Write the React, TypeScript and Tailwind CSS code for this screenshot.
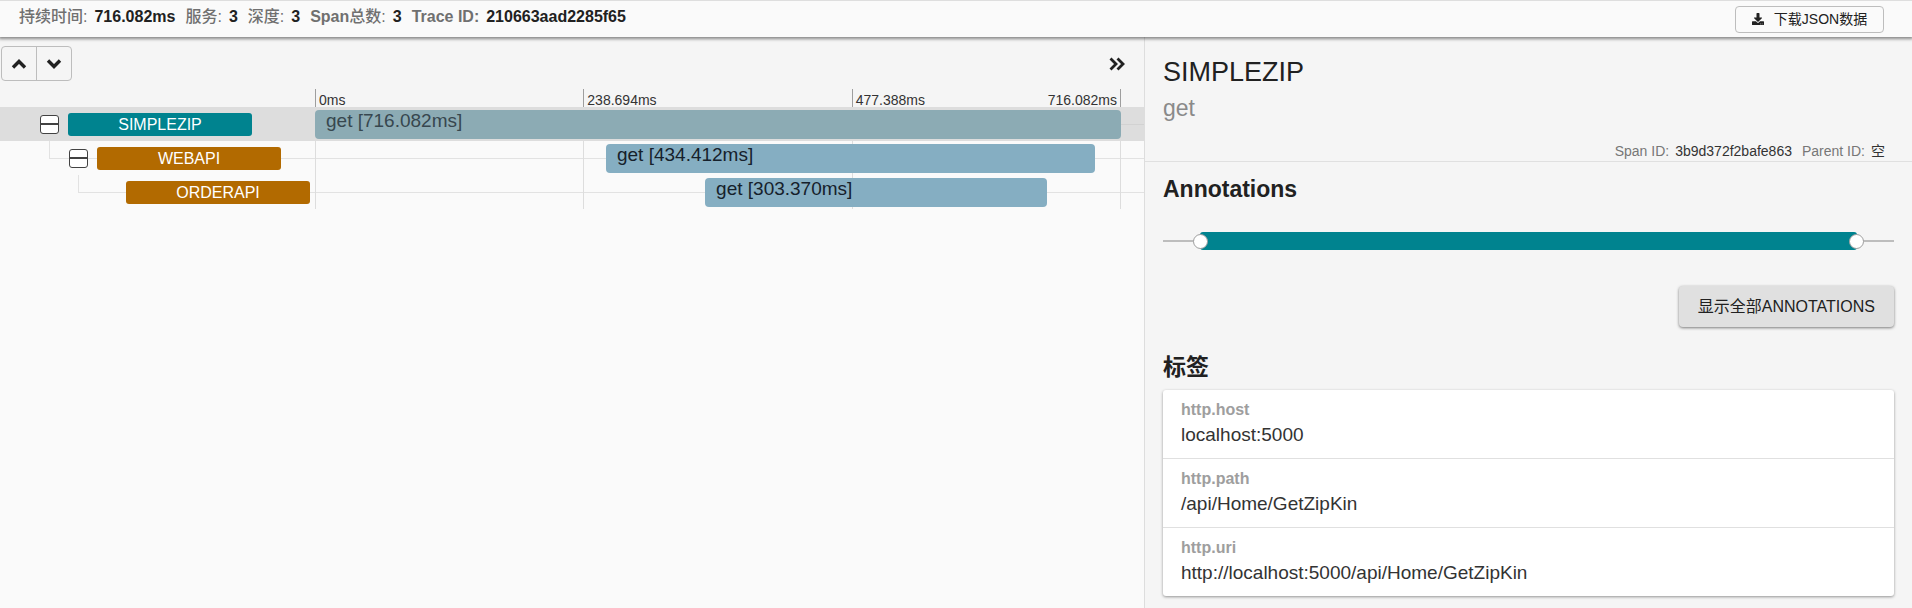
import React from 'react';
import { FaDownload } from 'react-icons/fa';

type Span = {
  service: string;
  name: string;
  duration: string;
  start: number;
  width: number;
  selected?: boolean;
};

const summary = [
  { latin: '', han: '持续时间:', value: '716.082ms' },
  { latin: '', han: '服务:', value: '3' },
  { latin: '', han: '深度:', value: '3' },
  { latin: 'Span', han: '总数:', value: '3' },
  { latin: 'Trace ID:', han: '', value: '210663aad2285f65' },
];

const root: Span = { service: 'SIMPLEZIP', name: 'get', duration: '716.082ms', start: 0, width: 100, selected: true };
const child: Span = { service: 'WEBAPI', name: 'get', duration: '434.412ms', start: 36.1, width: 60.7 };
const leaf: Span = { service: 'ORDERAPI', name: 'get', duration: '303.370ms', start: 48.4, width: 42.4 };

const tags = [
  { key: 'http.host', value: 'localhost:5000' },
  { key: 'http.path', value: '/api/Home/GetZipKin' },
  { key: 'http.uri', value: 'http://localhost:5000/api/Home/GetZipKin' },
];

function Header() {
  return (
    <header className="relative z-10 flex h-[37px] items-center justify-between border-t border-[#dedede] bg-[#fafafa] pr-7 pl-[19px] shadow-[0_1px_3px_1px_rgba(0,0,0,0.45)]">
      <dl className="flex gap-[10px] pb-1 text-[16px] leading-5 font-bold">
        {summary.map((item) => (
          <div key={item.latin + item.han} className="flex gap-[7px]">
            <dt className="text-[#707070]">
              {item.latin}
              <span className="font-medium">{item.han}</span>
            </dt>
            <dd className="text-[#212121]">{item.value}</dd>
          </div>
        ))}
      </dl>
      <button className="flex h-[27px] w-[149px] items-center justify-center gap-[10px] rounded-[4px] border border-[#bdbdbd] text-[14px] text-[#212121]">
        <FaDownload className="size-3" />
        下载JSON数据
      </button>
    </header>
  );
}

function Stroke({ d, className }: { d: string; className: string }) {
  return (
    <svg viewBox="0 0 16 16" className={className} fill="none" stroke="currentColor" aria-hidden="true">
      <path d={d} />
    </svg>
  );
}

function Toggle({ label }: { label: string }) {
  return (
    <button
      aria-label={label}
      className="relative flex size-[19px] shrink-0 items-center rounded-[3px] border border-[#424242] bg-white"
    >
      <span className="h-[2px] w-full bg-[#424242]" />
    </button>
  );
}

function SpanRow({ span, depth, expandable }: { span: Span; depth: 0 | 1 | 2; expandable: boolean }) {
  const indent = ['pl-10', 'pl-[69px]', 'pl-[98px]'][depth];
  const elbow = ['', 'left-[49px]', 'left-[78px]'][depth];
  return (
    <div className={`relative flex h-[34px] pr-[23px] ${span.selected ? 'bg-[#dddddd]' : ''}`}>
      {depth > 0 && <div className={`absolute top-0 right-0 h-[18px] border-b border-l border-[#e2e2e2] ${elbow}`} />}
      {depth === 0 && <div className="absolute top-[17px] right-0 h-px w-[23px] bg-[#d2d2d2]" />}
      <div className={`relative flex w-[315px] shrink-0 items-center gap-[9px] ${indent}`}>
        {expandable ? <Toggle label={`折叠 ${span.service}`} /> : <span className="w-[19px]" />}
        <span
          className={`h-[23px] w-[184px] shrink-0 rounded-[3px] text-center text-[16px] leading-[23px] text-white ${span.selected ? 'bg-[#00838f]' : 'bg-[#b26a00]'}`}
        >
          {span.service}
        </span>
      </div>
      <div className="relative grow py-[3px]">
        <div className="absolute inset-0 grid grid-cols-3 border-r border-[#dddddd]">
          <i className="border-l border-[#dddddd]" />
          <i className="border-l border-[#dddddd]" />
          <i className="border-l border-[#dddddd]" />
        </div>
        <div
          className={`relative h-[29px] rounded-[4px] pl-[11px] text-[19px] leading-[22px] whitespace-nowrap ${span.selected ? 'bg-[#8cabb4] text-[#37474f]' : 'bg-[#85aec2] text-[#16212b]'}`}
          style={{ marginLeft: `${span.start}%`, width: `${span.width}%` }}
        >
          {span.name} [{span.duration}]
        </div>
      </div>
    </div>
  );
}

function Timeline() {
  return (
    <section className="border-r border-[#dddddd] bg-[#fafafa]">
      <div className="bg-[#f5f5f5]">
        <div className="flex items-start justify-between pt-[9px] pr-[19px] pl-px">
          <div className="flex h-[35px] rounded-[4px] border border-[#bdbdbd] text-[#212121]">
            <button aria-label="上一个" className="flex w-[35px] items-center justify-center border-r border-[#bdbdbd]">
              <Stroke d="M2 11.5 8 5.5 14 11.5" className="size-4 stroke-[3.4]" />
            </button>
            <button aria-label="下一个" className="flex w-[34px] items-center justify-center">
              <Stroke d="M2 4.5 8 10.5 14 4.5" className="size-4 stroke-[3.4]" />
            </button>
          </div>
          <button aria-label="收起" className="flex h-[35px] items-center text-[#212121]">
            <Stroke d="M1.5 2.5 7 8 1.5 13.5M8.5 2.5 14 8 8.5 13.5" className="size-4 stroke-[2.8]" />
          </button>
        </div>
        <div className="mt-2 pr-[23px] pl-[315px]">
          <div className="grid h-[18px] grid-cols-3 border-r border-[#9e9e9e] text-[14px] leading-[22px] text-[#333333]">
            <span className="border-l border-[#9e9e9e] pl-[3px]">0ms</span>
            <span className="border-l border-[#9e9e9e] pl-[3px]">238.694ms</span>
            <span className="flex justify-between border-l border-[#9e9e9e] px-[3px]">
              <span>477.388ms</span>
              <span>716.082ms</span>
            </span>
          </div>
        </div>
      </div>
      <SpanRow span={root} depth={0} expandable />
      <SpanRow span={child} depth={1} expandable />
      <SpanRow span={leaf} depth={2} expandable={false} />
    </section>
  );
}

function Detail() {
  return (
    <section className="bg-[#f5f5f5]">
      <div className="border-b border-[#e0e0e0] px-[18px] pt-[17px]">
        <h1 className="text-[27px] leading-9 text-[#212121]">SIMPLEZIP</h1>
        <h2 className="text-[23px] leading-9 text-[#8a8a8a]">get</h2>
        <dl className="mt-[15px] flex justify-end gap-[10px] pr-[9px] text-[14px] leading-5 text-[#333333]">
          <div className="flex gap-[6px]">
            <dt className="text-[#777777]">Span ID:</dt>
            <dd>3b9d372f2bafe863</dd>
          </div>
          <div className="flex gap-[6px]">
            <dt className="text-[#777777]">Parent ID:</dt>
            <dd>空</dd>
          </div>
        </dl>
      </div>
      <div className="px-[18px] pt-[13px] pb-3">
        <h3 className="text-[23px] leading-7 font-bold text-[#212121]">Annotations</h3>
        <div className="mt-[29px] flex h-[18px] items-center">
          <span className="h-[2px] w-[5%] bg-[#bdbdbd]" />
          <span className="relative flex h-[18px] grow items-center justify-between rounded-[3px] bg-[#00838f]">
            <span className="-ml-[7px] size-[15px] rounded-full border border-[#9e9e9e] bg-white" />
            <span className="-mr-[7px] size-[15px] rounded-full border border-[#9e9e9e] bg-white" />
          </span>
          <span className="h-[2px] w-[5%] bg-[#bdbdbd]" />
        </div>
        <div className="mt-9 flex justify-end">
          <button className="h-[41px] rounded-[4px] bg-[#e0e0e0] px-[19px] text-[16px] text-[#212121] shadow-[0_1px_3px_rgba(0,0,0,0.5)]">
            显示全部ANNOTATIONS
          </button>
        </div>
        <h3 className="mt-[26px] text-[23px] leading-7 font-bold text-[#212121]">标签</h3>
        <dl className="mt-[9px] divide-y divide-[#e0e0e0] rounded-[3px] bg-white shadow-[0_1px_3px_rgba(0,0,0,0.4)]">
          {tags.map((tag) => (
            <div key={tag.key} className="px-[18px] pt-2 pb-[10px]">
              <dt className="text-[16px] leading-6 font-bold text-[#9e9e9e]">{tag.key}</dt>
              <dd className="text-[19px] leading-[26px] text-[#333333]">{tag.value}</dd>
            </div>
          ))}
        </dl>
      </div>
    </section>
  );
}

export default function App() {
  return (
    <div className="flex min-h-screen flex-col bg-[#fafafa] font-['Liberation_Sans','Noto_Sans_CJK_SC',sans-serif]">
      <Header />
      <main className="grid grow grid-cols-[1145fr_767fr]">
        <Timeline />
        <Detail />
      </main>
    </div>
  );
}
